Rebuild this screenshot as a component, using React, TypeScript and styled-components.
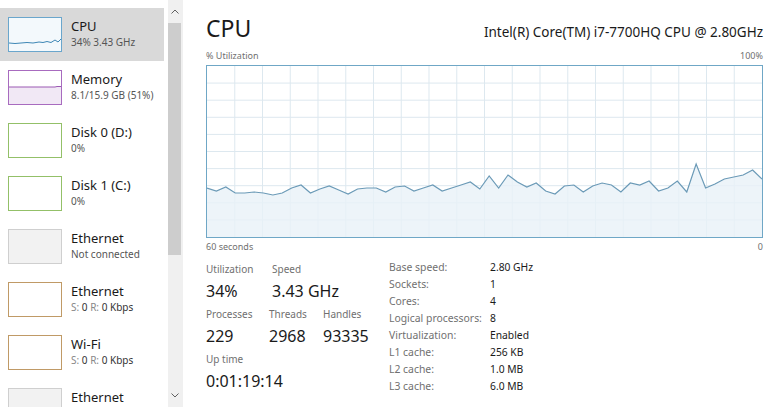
import React from 'react'
import styled, { createGlobalStyle } from 'styled-components'

const GlobalStyle = createGlobalStyle`
  html, body {
    margin: 0;
    padding: 0;
    background: #ffffff;
  }
  body {
    font-family: 'Segoe UI', 'Noto Sans', 'Open Sans', sans-serif;
    color: #1a1a1a;
  }
`

const Page = styled.div`
  display: flex;
  width: 770px;
  height: 407px;
  overflow: hidden;
  background: #fff;
`

const Sidebar = styled.div`
  display: flex;
  width: 183px;
  flex-shrink: 0;
`

const List = styled.div`
  width: 164px;
  padding-top: 8px;
  overflow: hidden;
`

const Row = styled.div<{ $selected?: boolean }>`
  display: flex;
  align-items: flex-start;
  height: 53px;
  padding: 9px 0 0 8px;
  box-sizing: border-box;
  gap: 9px;
  background: ${p => (p.$selected ? '#d9d9d9' : 'transparent')};
`

const Thumb = styled.div<{ $border: string; $fill: string }>`
  width: 52px;
  height: 33px;
  flex-shrink: 0;
  border: 1px solid ${p => p.$border};
  background: ${p => p.$fill};
  svg {
    display: block;
  }
`

const RowText = styled.div`
  display: flex;
  flex-direction: column;
  padding-top: 1px;
`

const RowTitle = styled.span`
  font-size: 13px;
  line-height: 17px;
  color: #1a1a1a;
`

const RowSub = styled.span`
  font-size: 10px;
  line-height: 14px;
  color: #555;
  b {
    font-weight: normal;
    color: #333;
  }
  i {
    font-style: normal;
    color: #888;
  }
`

const Scroll = styled.div`
  margin-left: 4px;
  width: 15px;
  display: flex;
  flex-direction: column;
  align-items: flex-start;
  background: #f0f0f0;
`

const Arrow = styled.div`
  width: 13px;
  height: 23px;
  display: flex;
  align-items: center;
  justify-content: center;
  color: #606060;
`

const ScrollThumb = styled.div`
  width: 13px;
  height: 232px;
  background: #cdcdcd;
`

const ScrollRest = styled.div`
  flex: 1;
`

const Main = styled.div`
  flex: 1;
  padding: 0 7px 0 23px;
  display: flex;
  flex-direction: column;
`

const Header = styled.div`
  display: flex;
  justify-content: space-between;
  align-items: baseline;
  height: 50px;
  padding-top: 11px;
  box-sizing: border-box;
`

const Title = styled.h1`
  margin: 0;
  font-size: 23px;
  font-weight: normal;
  line-height: 34px;
  color: #1a1a1a;
`

const Model = styled.span`
  font-size: 13.5px;
  color: #1a1a1a;
`

const AxisRow = styled.div<{ $gap?: number }>`
  display: flex;
  justify-content: space-between;
  font-size: 9px;
  color: #707070;
  line-height: 12px;
  margin-top: ${p => p.$gap ?? 0}px;
`

const Chart = styled.div`
  height: 171px;
  border: 1px solid #6fa7c6;
  margin-top: 3px;
  svg {
    display: block;
  }
`

const Stats = styled.div`
  display: flex;
  margin-top: 8px;
`

const Dynamic = styled.div`
  width: 183px;
  display: flex;
  flex-direction: column;
  gap: 1px;
`

const StatLine = styled.div`
  display: flex;
`

const Stat = styled.div<{ $w: number }>`
  width: ${p => p.$w}px;
  display: flex;
  flex-direction: column;
`

const Label = styled.span`
  font-size: 10px;
  color: #707070;
  line-height: 17px;
`

const Value = styled.span`
  font-size: 16px;
  line-height: 27px;
  color: #1a1a1a;
`

const Table = styled.div`
  display: grid;
  grid-template-columns: 101px auto;
  grid-auto-rows: 17px;
  align-items: center;
  margin-top: -3px;
`

const TLabel = styled.span`
  font-size: 10.4px;
  color: #707070;
  white-space: nowrap;
`

const TValue = styled.span`
  font-size: 10.3px;
  color: #1a1a1a;
`

const ys = [
  186, 189, 185, 191, 191, 190, 191, 193, 191, 186, 183, 191, 187, 184, 188, 192, 187, 186, 186, 190,
  185, 184, 189, 186, 183, 189, 186, 183, 180, 187, 174, 186, 173, 180, 185, 181, 189, 192, 184, 183,
  190, 184, 181, 183, 190, 181, 183, 179, 189, 186, 179, 190, 162, 186, 182, 177, 175, 173, 168, 177,
]

const W = 557
const H = 171

function CpuChart() {
  const step = W / (ys.length - 1)
  const pts = ys.map((y, i) => `${(i * step).toFixed(1)},${y - 64}`).join(' ')
  const area = `0,${H} ${pts} ${W},${H}`
  const cols = Array.from({ length: 19 }, (_, i) => ((i + 1) * W) / 20)
  const rows = Array.from({ length: 9 }, (_, i) => ((i + 1) * H) / 10)
  return (
    <svg width="100%" height={H} viewBox={`0 0 ${W} ${H}`} preserveAspectRatio="none">
      {cols.map(x => (
        <line key={'c' + x} x1={x} x2={x} y1={0} y2={H} stroke="#dde8ef" strokeWidth={1} />
      ))}
      {rows.map(y => (
        <line key={'r' + y} x1={0} x2={W} y1={y} y2={y} stroke="#dde8ef" strokeWidth={1} />
      ))}
      <polygon points={area} fill="#e9f1f7" fillOpacity={0.8} />
      <polyline points={pts} fill="none" stroke="#6b9ab7" strokeWidth={1.2} />
    </svg>
  )
}

const CpuThumb = () => (
  <svg width="52" height="33" viewBox="0 0 52 33">
    <polyline
      points="0,25 6,25.5 12,25 18,24.5 24,25 30,24 34,24.5 38,23.5 42,24.5 46,22 49,24 52,21"
      fill="none"
      stroke="#3d87b5"
      strokeWidth="1"
    />
  </svg>
)

const MemThumb = () => (
  <svg width="52" height="33" viewBox="0 0 52 33">
    <rect x="0" y="16" width="52" height="17" fill="#f1e8f5" />
    <polyline points="0,16 46,16 48,15.5 52,15.5" fill="none" stroke="#9b59b3" strokeWidth="1" />
  </svg>
)

type Item = {
  title: string
  sub?: React.ReactNode
  border: string
  fill: string
  graph?: React.ReactNode
  selected?: boolean
}

const net = (
  <>
    <i>S:</i> <b>0</b> <i>R:</i> <b>0 Kbps</b>
  </>
)

const items: Item[] = [
  { title: 'CPU', sub: '34% 3.43 GHz', border: '#6aa6cc', fill: '#f3f9fc', graph: <CpuThumb />, selected: true },
  { title: 'Memory', sub: '8.1/15.9 GB (51%)', border: '#a86bbf', fill: '#fff', graph: <MemThumb /> },
  { title: 'Disk 0 (D:)', sub: '0%', border: '#93c068', fill: '#fff' },
  { title: 'Disk 1 (C:)', sub: '0%', border: '#93c068', fill: '#fff' },
  { title: 'Ethernet', sub: 'Not connected', border: '#cfcfcf', fill: '#f2f2f2' },
  { title: 'Ethernet', sub: net, border: '#c09a66', fill: '#fff' },
  { title: 'Wi-Fi', sub: net, border: '#c09a66', fill: '#fff' },
  { title: 'Ethernet', border: '#cfcfcf', fill: '#f2f2f2' },
]

const specs: [string, string][] = [
  ['Base speed:', '2.80 GHz'],
  ['Sockets:', '1'],
  ['Cores:', '4'],
  ['Logical processors:', '8'],
  ['Virtualization:', 'Enabled'],
  ['L1 cache:', '256 KB'],
  ['L2 cache:', '1.0 MB'],
  ['L3 cache:', '6.0 MB'],
]

const Chevron = ({ up }: { up?: boolean }) => (
  <svg width="8" height="5" viewBox="0 0 8 5">
    <polyline
      points={up ? '0.5,4.5 4,1 7.5,4.5' : '0.5,0.5 4,4 7.5,0.5'}
      fill="none"
      stroke="#606060"
      strokeWidth="1"
    />
  </svg>
)

export default function App() {
  return (
    <Page>
      <GlobalStyle />
      <Sidebar>
        <List>
          {items.map((it, i) => (
            <Row key={i} $selected={it.selected}>
              <Thumb $border={it.border} $fill={it.fill}>
                {it.graph}
              </Thumb>
              <RowText>
                <RowTitle>{it.title}</RowTitle>
                {it.sub && <RowSub>{it.sub}</RowSub>}
              </RowText>
            </Row>
          ))}
        </List>
        <Scroll>
          <Arrow>
            <Chevron up />
          </Arrow>
          <ScrollThumb />
          <ScrollRest />
          <Arrow>
            <Chevron />
          </Arrow>
        </Scroll>
      </Sidebar>
      <Main>
        <Header>
          <Title>CPU</Title>
          <Model>Intel(R) Core(TM) i7-7700HQ CPU @ 2.80GHz</Model>
        </Header>
        <AxisRow>
          <span>% Utilization</span>
          <span>100%</span>
        </AxisRow>
        <Chart>
          <CpuChart />
        </Chart>
        <AxisRow $gap={3}>
          <span>60 seconds</span>
          <span>0</span>
        </AxisRow>
        <Stats>
          <Dynamic>
            <StatLine>
              <Stat $w={66}>
                <Label>Utilization</Label>
                <Value>34%</Value>
              </Stat>
              <Stat $w={110}>
                <Label>Speed</Label>
                <Value>3.43 GHz</Value>
              </Stat>
            </StatLine>
            <StatLine>
              <Stat $w={63}>
                <Label>Processes</Label>
                <Value>229</Value>
              </Stat>
              <Stat $w={54}>
                <Label>Threads</Label>
                <Value>2968</Value>
              </Stat>
              <Stat $w={60}>
                <Label>Handles</Label>
                <Value>93335</Value>
              </Stat>
            </StatLine>
            <StatLine>
              <Stat $w={120}>
                <Label>Up time</Label>
                <Value>0:01:19:14</Value>
              </Stat>
            </StatLine>
          </Dynamic>
          <Table>
            {specs.map(([k, v]) => (
              <React.Fragment key={k}>
                <TLabel>{k}</TLabel>
                <TValue>{v}</TValue>
              </React.Fragment>
            ))}
          </Table>
        </Stats>
      </Main>
    </Page>
  )
}
